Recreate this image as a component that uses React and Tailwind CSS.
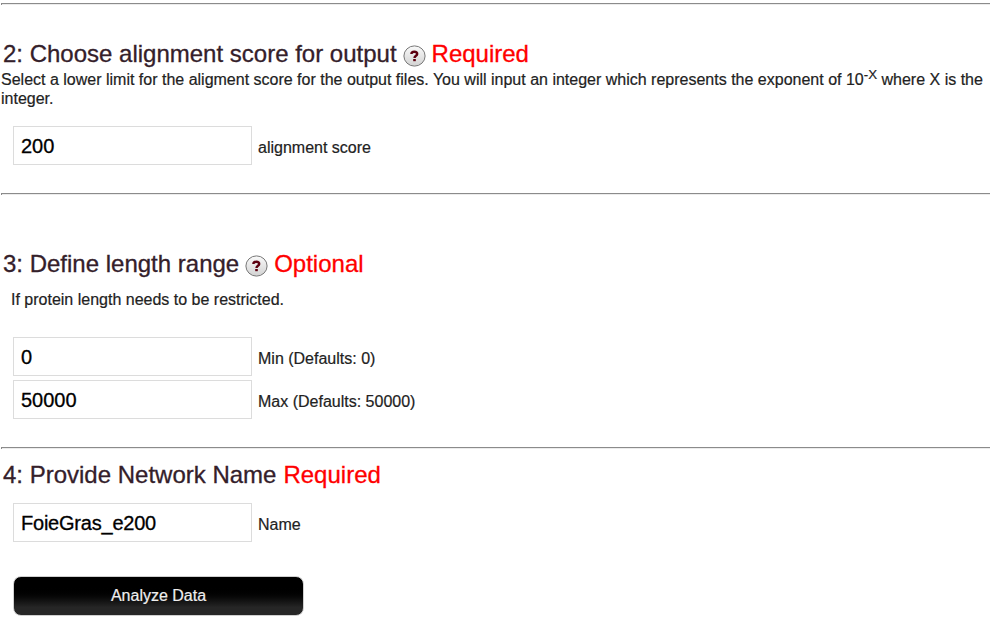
import React from 'react';

function Rule() {
  return <hr className="ml-px h-[2px] w-[989px] border-0 border-t border-l border-[#8b8b8b] bg-[#ececec]" />;
}

function HelpIcon() {
  return (
    <svg className="mx-[6px] mt-[4px] h-[22px] w-[23px] shrink-0" viewBox="0 0 23 22">
      <defs>
        <linearGradient id="disc" x1="0" y1="0" x2="0" y2="1">
          <stop offset="0" stopColor="#fafafa" />
          <stop offset="1" stopColor="#d2d2d2" />
        </linearGradient>
      </defs>
      <ellipse cx="11.5" cy="11" rx="10.6" ry="10.1" fill="url(#disc)" stroke="#777" strokeWidth="1" />
      <path d="M8.4 9.1C8.4 7.1 9.7 6.7 11.3 6.7C13.1 6.7 14.2 7.5 14.2 9C14.2 10.9 11.5 10.7 11.5 13" fill="none" stroke="#5c0010" strokeWidth="2.4" />
      <rect x="10.2" y="14" width="2.6" height="2.2" fill="#5c0010" />
    </svg>
  );
}

function Heading({ title, note, help }) {
  return (
    <h2 className="ml-[3px] flex h-[30px] items-center text-[24px] leading-[30px] whitespace-nowrap text-[#34202a] [-webkit-text-stroke:0.3px]">
      <span>{title}</span>
      {help ? <HelpIcon /> : <span className="w-[7px]" />}
      <span className="text-[#ff0000]">{note}</span>
    </h2>
  );
}

function Field({ value, label, inputClass = '' }) {
  return (
    <label className="ml-[13px] flex h-[39px] items-center gap-[6px]">
      <input
        type="text"
        defaultValue={value}
        className={`h-[39px] w-[239px] border border-[#dcdcdc] bg-white px-[7px] pt-[2px] text-[20px] text-black outline-none [-webkit-text-stroke:0.3px] ${inputClass}`}
      />
      <span className="mt-[4px] leading-[19px]">{label}</span>
    </label>
  );
}

export default function App() {
  return (
    <main className="h-[637px] w-[997px] overflow-hidden bg-white pt-[3px] font-['Liberation_Sans',Arial,sans-serif] text-[16px] leading-[19px] text-[#222] [-webkit-text-stroke:0.2px]">
      <Rule />
      <section className="h-[188px] pt-[34px]">
        <Heading title="2: Choose alignment score for output" note="Required" help />
        <p className="mt-px mb-[18px] ml-px h-[38px] whitespace-nowrap">
          Select a lower limit for the aligment score for the output files. You will input an integer which represents the exponent of 10
          <sup className="top-[-6px] text-[13.33px] leading-[0]">-X</sup> where X is the
          <br />
          integer.
        </p>
        <Field value="200" label="alignment score" />
      </section>
      <Rule />
      <section className="h-[252px] pt-[54px]">
        <Heading title="3: Define length range" note="Optional" help />
        <p className="mt-[11px] mb-[28px] ml-[11px]">If protein length needs to be restricted.</p>
        <div className="flex flex-col gap-[4px]">
          <Field value="0" label="Min (Defaults: 0)" />
          <Field value="50000" label="Max (Defaults: 50000)" />
        </div>
      </section>
      <Rule />
      <section className="pt-[11px]">
        <Heading title="4: Provide Network Name" note="Required" />
        <div className="mt-[13px]">
          <Field value="FoieGras_e200" label="Name" inputClass="tracking-[-0.22px]" />
        </div>
        <button className="mt-[34px] ml-[13px] block h-[40px] w-[291px] rounded-[8px] border border-[#d0d0d0] bg-linear-to-b from-black from-25% to-[#262626] to-80% pb-[2px] text-[16px] text-[#eeeeee]">
          Analyze Data
        </button>
      </section>
    </main>
  );
}
